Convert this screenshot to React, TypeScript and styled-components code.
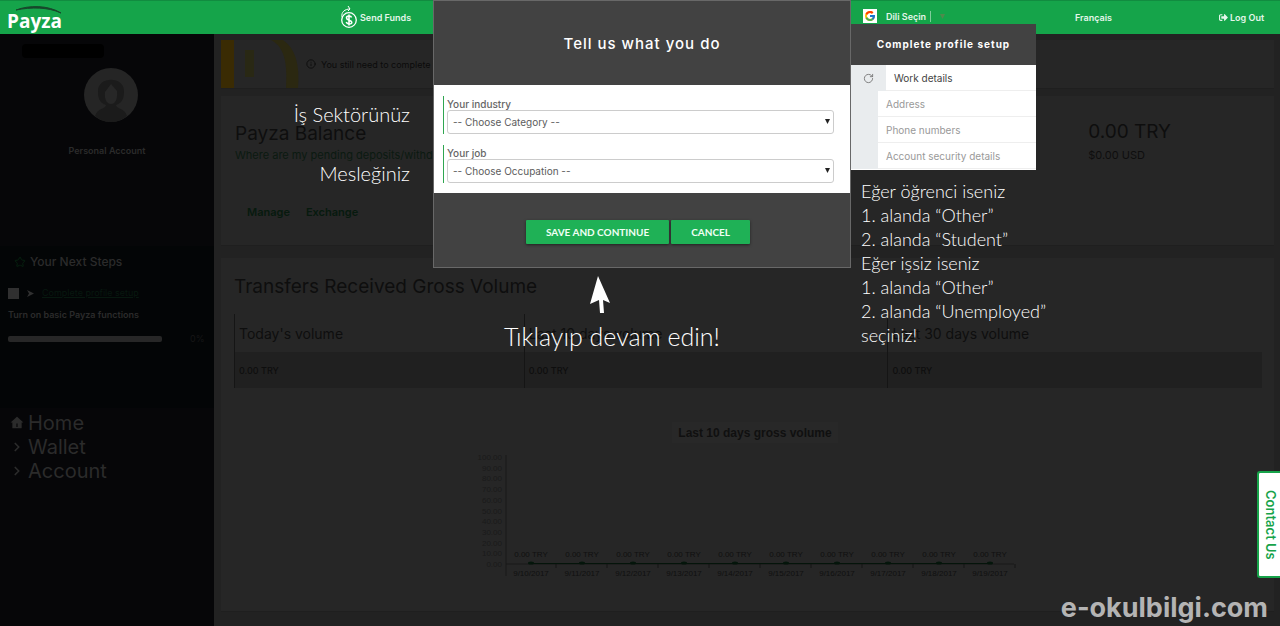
import React from "react";
import styled, { createGlobalStyle } from "styled-components";
import { FcGoogle } from "react-icons/fc";
import { FaSignOutAlt } from "react-icons/fa";
import { RiHome4Fill } from "react-icons/ri";
import { ChevronRight, Info, RotateCw, Star } from "lucide-react";

const sans = `Inter, "Open Sans", "Liberation Sans", sans-serif`;
const light = `Lato, "Open Sans", "Liberation Sans", sans-serif`;

const GlobalStyle = createGlobalStyle`
  * { box-sizing: border-box; }
  body { margin: 0; background: #222222; font-family: ${sans}; color: #0e0e0e; }
  h1, h2, p, ul, ol { margin: 0; padding: 0; }
  h1, h2 { font-weight: 400; }
  ul, ol { list-style: none; }
  a { color: inherit; text-decoration: none; }
  button, select, input { font-family: inherit; }
`;

const Page = styled.div`
  position: relative;
  min-height: 100vh;
  display: flex;
  flex-direction: column;
  overflow: hidden;
`;

const Header = styled.header`
  height: 34px;
  background: #15a44a;
  border-top: 1px solid #118c40;
  color: #e4f6ea;
  display: grid;
  grid-template-columns: 333fr 523fr 212fr 144fr 54fr;
  align-items: center;
  padding-left: 7px;
  padding-right: 7px;
  font-size: 9px;
  font-weight: 600;
`;

const HeaderLink = styled.a`
  display: flex;
  align-items: center;
  gap: 2px;
  white-space: nowrap;
`;

const LanguagePicker = styled.button`
  display: flex;
  align-items: center;
  gap: 9px;
  padding: 0;
  height: 30px;
  align-self: start;
  border: 0;
  background: none;
  color: inherit;
  font-size: 9px;
  font-weight: 600;
`;

const GoogleBadge = styled.span`
  display: flex;
  padding: 1px;
  background: #ffffff;
`;

const PickerLabel = styled.span`
  padding-right: 4px;
  border-right: 1px solid #7fcd9b;
`;

const Logo = styled.a`
  position: relative;
  display: flex;
  align-self: end;
  height: 28px;
  font: 700 19px/30px "Open Sans", sans-serif;
  color: #ffffff;

  svg { position: absolute; left: 8px; top: 0; }
`;

const Body = styled.div`
  flex: 1;
  display: flex;
`;

const Sidebar = styled.aside`
  width: 214px;
  flex: none;
  background: #060608;
  color: #2b2b2b;
  display: flex;
  flex-direction: column;
`;

const Profile = styled.section`
  display: flex;
  flex-direction: column;
  align-items: center;
  padding-top: 10px;
  height: 212px;
  font-size: 9px;
  font-weight: 600;
`;

const HiddenName = styled.span`
  width: 82px;
  height: 14px;
  margin-right: 88px;
  margin-bottom: 10px;
  border-radius: 4px;
  background: #000000;
`;

const Avatar = styled.svg`
  margin-left: 8px;
`;

const AccountType = styled.p`
  margin-top: 23px;
`;

const Steps = styled.section`
  height: 162px;
  padding: 8px 8px 0;
  background: #030506;
  font-size: 9px;
  font-weight: 600;
`;

const StepsTitle = styled.h2`
  display: flex;
  align-items: center;
  gap: 4px;
  padding-left: 6px;
  font-size: 12px;
  line-height: 16px;
  font-weight: 500;

  svg { color: #06200f; }
`;

const StepRow = styled.label`
  display: flex;
  align-items: center;
  gap: 8px;
  margin: 15px 0 8px;
  line-height: 16px;
  font-weight: 400;
`;

const StepCheck = styled.input`
  appearance: none;
  width: 11px;
  height: 11px;
  margin: 0;
  background: #303030;
`;

const StepLink = styled.a`
  color: #07180f;
  text-decoration: underline;
`;

const Meter = styled.div`
  display: flex;
  align-items: center;
  gap: 28px;
  margin-top: 13px;
  font-weight: 400;
  color: #161616;
`;

const MeterTrack = styled.div`
  width: 154px;
  height: 6px;
  border-radius: 2px;
  background: #272727;
`;

const Menu = styled.nav`
  display: flex;
  flex-direction: column;
  padding: 3px 10px;
  font-size: 20px;
  line-height: 24px;
`;

const MenuLink = styled.a`
  display: flex;
  align-items: center;
  gap: 4px;
`;

const Main = styled.main`
  flex: 1;
  display: flex;
  flex-direction: column;
  padding: 6px 6px 14px 7px;
`;

const Card = styled.section<{ $height?: number; $gap: number }>`
  min-height: ${(p) => p.$height ?? 0}px;
  margin-bottom: ${(p) => p.$gap}px;
  background: #262626;
  border-bottom: 1px solid #1f1f1f;
`;

const Notice = styled(Card)`
  display: flex;
  align-items: center;
  gap: 5px;
  font-size: 9px;
  color: #0b0b0b;
`;

const NoticeArt = styled.svg`
  flex: none;
`;

const Balance = styled(Card)`
  display: flex;
  justify-content: space-between;
  padding: 26px 103px 0 14px;
`;

const Heading = styled.h2`
  font-size: 19px;
  line-height: 24px;
`;

const Hint = styled.a`
  display: block;
  font-size: 11px;
  line-height: 18px;
  color: #0b1a11;
`;

const Actions = styled.div`
  display: flex;
  gap: 16px;
  padding: 40px 12px 0;
  font-size: 11px;
  line-height: 16px;
  font-weight: 600;
  color: #071a0e;
`;

const Amount = styled.p`
  font-size: 19px;
  line-height: 20px;
`;

const AmountSmall = styled.p`
  font-size: 11px;
  line-height: 26px;
`;

const Volume = styled(Card)`
  padding: 17px 12px 24px 13px;
  flex: 1;
`;

const VolumeTable = styled.table`
  width: 100%;
  margin-top: 15px;
  border-collapse: collapse;
  table-layout: fixed;

  th, td {
    padding: 0 4px;
    border-left: 1px solid #151515;
    text-align: left;
  }
  th { height: 38px; font-size: 14px; font-weight: 400; }
  td { height: 36px; font-size: 9px; font-weight: 500; background: #202020; }
`;

const ChartBox = styled.div`
  display: flex;
  justify-content: center;
  padding-top: 28px;
  padding-left: 14px;
`;

const Overlay = styled.div`
  position: absolute;
  inset: 0;
  display: grid;
  grid-template-columns: 1fr 418px 1fr;
  align-items: start;
  padding-left: 4px;
`;

const FieldNotes = styled.div`
  padding: 100px 23px 0 0;
  display: flex;
  flex-direction: column;
  gap: 31px;
  text-align: right;
  font-family: ${light};
  font-size: 20px;
  line-height: 28px;
  font-weight: 300;
  color: #ffffff;
`;

const Dialog = styled.form`
  border: 1px solid #686868;
  background: #424242;
`;

const DialogTitle = styled.h1`
  height: 84px;
  display: flex;
  align-items: center;
  justify-content: center;
  font-size: 15px;
  font-weight: 500;
  letter-spacing: 1px;
  color: #ffffff;
`;

const Fields = styled.div`
  display: flex;
  flex-direction: column;
  gap: 11px;
  padding: 11px 16px 10px 9px;
  background: #ffffff;
`;

const Field = styled.div`
  border-left: 1px solid #2fa650;
  padding: 3px 0 0 3px;
`;

const FieldLabel = styled.label`
  display: block;
  font-size: 10px;
  line-height: 11px;
  font-weight: 500;
  color: #666666;
`;

const SelectBox = styled.div`
  position: relative;

  svg { position: absolute; right: 4px; top: 9px; pointer-events: none; }
`;

const Select = styled.select`
  appearance: none;
  display: block;
  width: 100%;
  height: 24px;
  padding: 0 6px 1px 5px;
  border: 1px solid #cccccc;
  border-radius: 3px;
  background: #ffffff;
  font-size: 10px;
  color: #5c5c5c;
`;

const DialogActions = styled.div`
  display: flex;
  justify-content: center;
  gap: 2px;
  padding: 27px 8px 23px 0;
`;

const GreenButton = styled.button`
  height: 24px;
  padding: 0 20px;
  border: 0;
  border-radius: 1px;
  background: #1fb156;
  box-shadow: 0 1px 3px rgba(0, 0, 0, 0.5);
  font-family: ${light};
  font-size: 10px;
  font-weight: 700;
  color: #f0fff5;
`;

const Callout = styled.div`
  display: flex;
  flex-direction: column;
  align-items: center;
  padding: 8px 60px 0 0;
  font-family: ${light};
  font-size: 25px;
  line-height: 32px;
  font-weight: 300;
  color: #ffffff;

  svg { margin: 0 0 6px -24px; }
`;

const SetupColumn = styled.div`
  padding-top: 24px;
`;

const SetupPanel = styled.section`
  width: 185px;
  padding-bottom: 1px;
  background: #ffffff;
  font-size: 10px;
`;

const SetupTitle = styled.h2`
  height: 41px;
  background: #424242;
  color: #ffffff;
  font-size: 10px;
  font-weight: 700;
  line-height: 41px;
  letter-spacing: 1px;
  text-align: center;
`;

const SetupItem = styled.li<{ $current?: boolean }>`
  display: flex;
  height: 26px;
  line-height: 27px;
  color: ${(p) => (p.$current ? "#444444" : "#999999")};
`;

const SetupMark = styled.span<{ $current?: boolean }>`
  width: ${(p) => (p.$current ? 35 : 27)}px;
  display: flex;
  align-items: center;
  justify-content: center;
  background: #e9ecee;
  color: #777777;
`;

const SetupText = styled.span`
  flex: 1;
  padding-left: 8px;
  border-bottom: 1px solid #eeeeee;
`;

const Advice = styled.div`
  padding: 9px 0 0 10px;
  font-family: ${light};
  font-size: 18px;
  line-height: 24px;
  font-weight: 300;
  color: #ffffff;
`;

const ContactTab = styled.button`
  position: absolute;
  right: 0;
  top: 471px;
  width: 23px;
  height: 107px;
  padding: 0 0 0 3px;
  border: 2px solid #17a34a;
  border-right: 0;
  border-radius: 3px 0 0 3px;
  background: #ffffff;
  color: #17a34a;
  writing-mode: vertical-rl;
  font: 600 13px/18px ${sans};
`;

const Watermark = styled.p`
  position: absolute;
  right: 12px;
  bottom: 0;
  font-size: 27px;
  line-height: 36px;
  font-weight: 700;
  color: #b4b4b4;
`;

const days = [10, 11, 12, 13, 14, 15, 16, 17, 18, 19];
const ticks = ["100.00", "90.00", "80.00", "70.00", "60.00", "50.00", "40.00", "30.00", "20.00", "10.00", "0.00"];

function Chart() {
  return (
    <svg width="590" height="168" viewBox="0 0 590 168" fontFamily="Liberation Sans, sans-serif" fontSize="8" fill="#101010">
      <rect x="212" y="6" width="166" height="21" fill="#282828" />
      <text x="295" y="21" textAnchor="middle" fontSize="12" fontWeight="700">Last 10 days gross volume</text>
      {ticks.map((t, i) => (
        <text key={t} x="42" y={44 + i * 10.7} textAnchor="end" fill="#1a1a1a">{t}</text>
      ))}
      <path d="M46 39V160M46 148H554" stroke="#191919" />
      {days.map((d, i) => (
        <g key={d} textAnchor="middle">
          <text x={71 + i * 51} y="141">0.00 TRY</text>
          <ellipse cx={71 + i * 51} cy="147" rx="3" ry="1.500" fill="#04160b" />
          <text x={71 + i * 51} y="160">9/{d}/2017</text>
          <path d={`M${96 + i * 51} 148v4`} stroke="#151515" />
        </g>
      ))}
      <path d="M71 147.500H530" stroke="#04140a" />
    </svg>
  );
}

function Caret({ color }: { color: string }) {
  return (
    <svg width="5" height="5" viewBox="0 0 5 5"><path d="M0 0h5L2.500 5z" fill={color} /></svg>
  );
}

function ChoiceField({ id, label, placeholder }: { id: string; label: string; placeholder: string }) {
  return (
    <Field>
      <FieldLabel htmlFor={id}>{label}</FieldLabel>
      <SelectBox>
        <Select id={id}><option>{placeholder}</option></Select>
        <Caret color="#222222" />
      </SelectBox>
    </Field>
  );
}

export default function App() {
  return (
    <Page>
      <GlobalStyle />
      <Header>
        <Logo href="#">
          Payza
          <svg width="48" height="9" viewBox="0 0 48 9"><path d="M1 4C14 -1 33 -1 46 7C33 1 16 1 1 4Z" fill="#17482b" stroke="#17482b" /></svg>
        </Logo>
        <HeaderLink href="#">
          <svg width="18" height="24" viewBox="0 0 18 24" fill="none" stroke="#ffffff" strokeWidth="1.300">
            <circle cx="9" cy="14" r="7.300" />
            <path d="M2 11C1 6 5 3 10 3L8 0M10 3L8 5" strokeWidth="1" />
            <path d="M11.500 11.500C11 9.500 6.500 9.500 6.500 12S11.800 14 11.800 16.300S7 18.500 6.200 16M9 8.500V19.500" strokeWidth="1.600" />
          </svg>
          Send Funds
        </HeaderLink>
        <LanguagePicker>
          <GoogleBadge><FcGoogle size={12} /></GoogleBadge>
          <PickerLabel>Dili Seçin</PickerLabel>
          <Caret color="#4f8a4c" />
        </LanguagePicker>
        <HeaderLink href="#">Français</HeaderLink>
        <HeaderLink href="#"><FaSignOutAlt size={9} />Log Out</HeaderLink>
      </Header>
      <Body>
        <Sidebar>
          <Profile>
            <HiddenName />
            <Avatar width="54" height="54" viewBox="0 0 54 54">
              <circle cx="27" cy="27" r="27" fill="#252525" />
              <path d="M11 48C13 40 22 41 22 37C15 35 14 29 14 23C14 8 40 8 40 23C40 29 39 35 32 37C32 41 41 40 43 48C34 56 20 56 11 48Z" fill="#1b1b1b" />
              <path d="M27 16L33 23C34 33 30 36 27 36S20 33 21 24Z" fill="#272727" />
            </Avatar>
            <AccountType>Personal Account</AccountType>
          </Profile>
          <Steps>
            <StepsTitle><Star size={12} />Your Next Steps</StepsTitle>
            <StepRow>
              <StepCheck type="checkbox" />
              <svg width="7" height="7" viewBox="0 0 7 7"><path d="M0 0L7 3.500L0 7L2 3.500Z" fill="#303030" /></svg>
              <StepLink href="#">Complete profile setup</StepLink>
            </StepRow>
            <p>Turn on basic Payza functions</p>
            <Meter><MeterTrack />0%</Meter>
          </Steps>
          <Menu>
            <MenuLink href="#"><RiHome4Fill size={14} />Home</MenuLink>
            <MenuLink href="#"><ChevronRight size={14} strokeWidth={3} />Wallet</MenuLink>
            <MenuLink href="#"><ChevronRight size={14} strokeWidth={3} />Account</MenuLink>
          </Menu>
        </Sidebar>
        <Main>
          <Notice $height={49} $gap={7}>
            <NoticeArt width="80" height="48" viewBox="0 0 80 48">
              <path d="M0 0H13V48H0Z" fill="#3a2b03" />
              <path d="M24 10H33V37H24Z" fill="#292814" />
              <path d="M50 0C62 6 67 20 65 48H77C79 24 74 8 62 0Z" fill="#2b2811" />
            </NoticeArt>
            <Info size={10} />
            <span>You still need to complete your profile</span>
          </Notice>
          <Balance $height={150} $gap={12}>
            <div>
              <Heading>Payza Balance</Heading>
              <Hint href="#">Where are my pending deposits/withdrawals?</Hint>
              <Actions><a href="#">Manage</a><a href="#">Exchange</a></Actions>
            </div>
            <div>
              <Amount>0.00 TRY</Amount>
              <AmountSmall>$0.00 USD</AmountSmall>
            </div>
          </Balance>
          <Volume $gap={0}>
            <Heading>Transfers Received Gross Volume</Heading>
            <VolumeTable>
              <colgroup><col width="28.200%" /><col width="35.400%" /><col /></colgroup>
              <thead><tr><th>Today's volume</th><th>Last 10 days volume</th><th>Last 30 days volume</th></tr></thead>
              <tbody><tr><td>0.00 TRY</td><td>0.00 TRY</td><td>0.00 TRY</td></tr></tbody>
            </VolumeTable>
            <ChartBox><Chart /></ChartBox>
          </Volume>
        </Main>
      </Body>
      <Overlay>
        <FieldNotes><p>İş Sektörünüz</p><p>Mesleğiniz</p></FieldNotes>
        <div>
          <Dialog>
            <DialogTitle>Tell us what you do</DialogTitle>
            <Fields>
              <ChoiceField id="industry" label="Your industry" placeholder="-- Choose Category --" />
              <ChoiceField id="job" label="Your job" placeholder="-- Choose Occupation --" />
            </Fields>
            <DialogActions>
              <GreenButton type="button">SAVE AND CONTINUE</GreenButton>
              <GreenButton type="button">CANCEL</GreenButton>
            </DialogActions>
          </Dialog>
          <Callout>
            <svg width="20" height="38" viewBox="0 0 20 38"><path d="M8 0L20 27L13 24L14 37H10L9 24L0 28Z" fill="#ffffff" /></svg>
            <p>Tıklayıp devam edin!</p>
          </Callout>
        </div>
        <SetupColumn>
          <SetupPanel>
            <SetupTitle>Complete profile setup</SetupTitle>
            <ol>
              <SetupItem $current><SetupMark $current><RotateCw size={11} /></SetupMark><SetupText>Work details</SetupText></SetupItem>
              <SetupItem><SetupMark /><SetupText>Address</SetupText></SetupItem>
              <SetupItem><SetupMark /><SetupText>Phone numbers</SetupText></SetupItem>
              <SetupItem><SetupMark /><SetupText>Account security details</SetupText></SetupItem>
            </ol>
          </SetupPanel>
          <Advice>
            <p>Eğer öğrenci iseniz</p>
            <p>1. alanda “Other”</p>
            <p>2. alanda “Student”</p>
            <p>Eğer işsiz iseniz</p>
            <p>1. alanda “Other”</p>
            <p>2. alanda “Unemployed”</p>
            <p>seçiniz!</p>
          </Advice>
        </SetupColumn>
      </Overlay>
      <ContactTab>Contact Us</ContactTab>
      <Watermark>e-okulbilgi.com</Watermark>
    </Page>
  );
}
